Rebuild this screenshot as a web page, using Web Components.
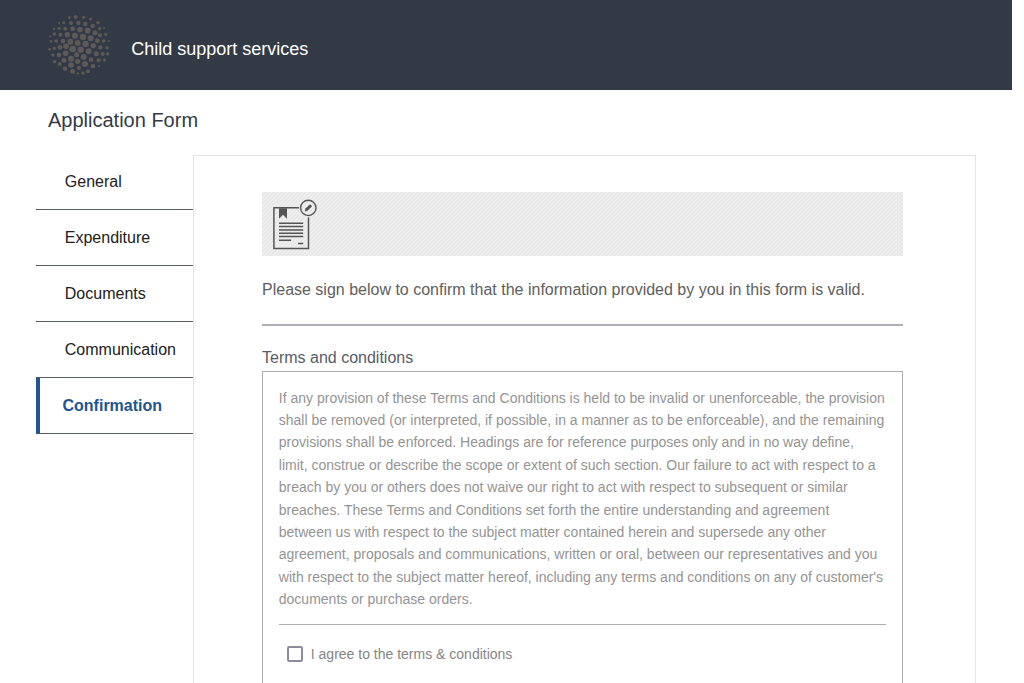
<!DOCTYPE html>
<html lang="en">
<head>
<meta charset="utf-8">
<title>Child support services</title>
<style>
html,body{margin:0;height:683px;overflow:hidden;background:#fff;font-family:"Liberation Sans",Arial,sans-serif}
</style>
</head>
<body>
<form-page>
  <site-header slot="header">Child support services</site-header>
  <span slot="title">Application Form</span>
  <side-nav slot="nav">
    <nav-item>General</nav-item>
    <nav-item>Expenditure</nav-item>
    <nav-item>Documents</nav-item>
    <nav-item>Communication</nav-item>
    <nav-item active>Confirmation</nav-item>
  </side-nav>
  <confirm-panel>
    <sign-banner slot="banner"></sign-banner>
    <span slot="intro">Please sign below to confirm that the information provided by you in this form is valid.</span>
    <terms-box label="Terms and conditions">If any provision of these Terms and Conditions is held to be invalid or unenforceable, the provision<br>shall be removed (or interpreted, if possible, in a manner as to be enforceable), and the remaining<br>provisions shall be enforced. Headings are for reference purposes only and in no way define,<br>limit, construe or describe the scope or extent of such section. Our failure to act with respect to a<br>breach by you or others does not waive our right to act with respect to subsequent or similar<br>breaches. These Terms and Conditions set forth the entire understanding and agreement<br>between us with respect to the subject matter contained herein and supersede any other<br>agreement, proposals and communications, written or oral, between our representatives and you<br>with respect to the subject matter hereof, including any terms and conditions on any of customer's<br>documents or purchase orders.<agree-check slot="agree">I agree to the terms &amp; conditions</agree-check></terms-box>
  </confirm-panel>
</form-page>
<script>
const define = (name, html, setup) => customElements.define(name, class extends HTMLElement {
  constructor() {
    super();
    this.attachShadow({ mode: 'open' }).innerHTML = html;
  }
  connectedCallback() { if (setup) setup(this, this.shadowRoot); }
});

define('form-page', `<style>
:host{display:flex;flex-direction:column;width:1012px;height:683px}
h1{box-sizing:border-box;margin:0;padding:17px 0 0 48px;height:65px;flex:none;font-weight:400;font-size:20px;line-height:26px;color:#333a45}
main{display:flex;flex:1;min-height:0;padding:0 36px}
</style><slot name="header"></slot><h1><slot name="title"></slot></h1><main><slot name="nav"></slot><slot></slot></main>`);

// Logo dots: x, y, radius in a 240 by 225 field
const dots = [
[88,29,4],[107,27,6],[131,28,5],[152,33,4.5],
[57,45,3],[71,44,4.5],[93,45,6],[115,45,6.5],[136,48,6.5],[158,54,6.5],[174,44,5],
[42,63,3.5],[57,61,5],[76,62,6],[98,62,7],[120,65,8],[143,68,8.5],[165,74,7.5],[179,62,5],[192,60,3],
[30,85,3],[43,78,5],[61,80,6],[82,80,8],[105,83,9],[129,87,9.5],[152,91,9],[180,82,6],[197,79,5],
[33,100,4],[49,99,5.5],[69,99,7],[91,101,8.5],[113,105,9],[137,108,9.5],[172,98,7],[191,99,5.5],[207,99,3],
[29,124,4],[43,121,5],[60,118,7],[78,115,8.5],[98,123,10],[122,125,9.5],[160,113,8],[181,118,6.5],[201,119,5],
[39,141,5],[57,141,7],[77,136,8.5],[93,152,9],[110,140,7.5],[146,130,9],[169,137,7.5],[188,138,6],[203,138,5],
[44,161,5],[59,168,6],[72,157,7.5],[113,160,8],[131,147,9],[153,155,7],[176,157,6],[193,156,5],
[75,182,6.5],[93,171,8.5],[135,168,9],[159,174,7],[177,174,3],
[98,190,7.5],[117,180,6.5],[144,190,6],[114,196,3.5],[129,195,5]];

define('site-header', `<style>
:host{display:flex;flex:none;box-sizing:border-box;height:90px;padding-left:40px;background:#333a46;color:#fff;font-size:18px}
svg{display:block;width:80px;height:75px;margin-top:8px;fill:#5b5a58}
span{margin:38px 0 0 11.3px;line-height:22px}
</style><svg viewBox="0 0 240 225">${dots.map(([x, y, r]) => `<circle cx="${x}" cy="${y}" r="${r}"/>`).join('')}</svg><span><slot></slot></span>`);

define('side-nav', `<style>
:host{display:flex;flex-direction:column;width:157px;flex:none}
</style><slot></slot>`);

define('nav-item', `<style>
:host{display:flex;align-items:center;box-sizing:border-box;height:56px;padding-left:28.8px;border-bottom:1px solid #565b64;font-size:16px;color:#212121}
:host(:first-child){height:55px}
:host([active]){border-left:4px solid #205493;padding:0 0 0 22.5px;color:#205493;font-weight:700}
</style><slot></slot>`);

define('confirm-panel', `<style>
:host{display:flex;flex-direction:column;box-sizing:border-box;width:783px;padding:36px 72px 0 68px;border:1px solid #e4e4e4;border-bottom:0}
p{box-sizing:border-box;margin:0;padding-top:22px;height:68px;flex:none;font-size:16px;line-height:24px;color:#606060;white-space:nowrap}
hr{margin:0;border:0;width:100%;height:2px;flex:none;background:#aeaeb5}
</style><slot name="banner"></slot><p><slot name="intro"></slot></p><hr><slot></slot>`);

define('sign-banner', `<style>
:host{display:block;flex:none;height:64px;background:linear-gradient(135deg,#e6e6e6 10%,#f0f0f0 15% 35%,#e6e6e6 40% 60%,#f0f0f0 65% 85%,#e6e6e6 90%) 0 0/4px 4px}
svg{display:block;width:62px;height:64px}
</style><svg viewBox="262 192 62 64" fill="none" stroke="#555">
<path d="M299 207.8H273.9V248.6H308.5V217.5" stroke-width="1.5"/>
<path d="M279 208.2h8v10.6l-4-4-4 4z" fill="#555" stroke="none"/>
<path d="M279 223.2h24.2M279 226.6h24.2M279 229.9h24.2M279 233.3h24.2M279 236.6h24.2M279 240.2h12.2M298 243.6h5.2" stroke-width="1.5"/>
<circle cx="308.3" cy="207.9" r="7.7" stroke-width="1.4"/>
<path d="m304.8 211.4.7-2.8 4.6-4.4 2 2-4.6 4.5z" fill="#555" stroke="none"/>
</svg>`);

define('terms-box', `<style>
:host{display:flex;flex-direction:column;flex:1;min-height:0}
h2{box-sizing:border-box;margin:0;padding-top:21px;height:45px;flex:none;font-size:16px;font-weight:400;line-height:22px;color:#575c67}
section{box-sizing:border-box;flex:1;min-height:0;padding:14.6px 16px 0 15.8px;border:1px solid #adadb2;border-bottom:0}
p{margin:0;height:237.4px;font-size:14px;line-height:22.4px;color:#949494;white-space:nowrap}
hr{margin:0;border:0;height:1px;background:#adadb5}
</style><h2></h2><section><p><slot></slot></p><hr><slot name="agree"></slot></section>`,
(el, root) => { root.querySelector('h2').textContent = el.getAttribute('label'); });

define('agree-check', `<style>
:host{display:flex;align-items:center;gap:8px;padding:21px 0 0 8px;font-size:14px;line-height:16px;color:#858585}
i{box-sizing:border-box;width:16px;height:16px;border:2px solid #8f8b9f;border-radius:2px}
</style><i role="checkbox" aria-checked="false"></i><span><slot></slot></span>`);
</script>
</body>
</html>
